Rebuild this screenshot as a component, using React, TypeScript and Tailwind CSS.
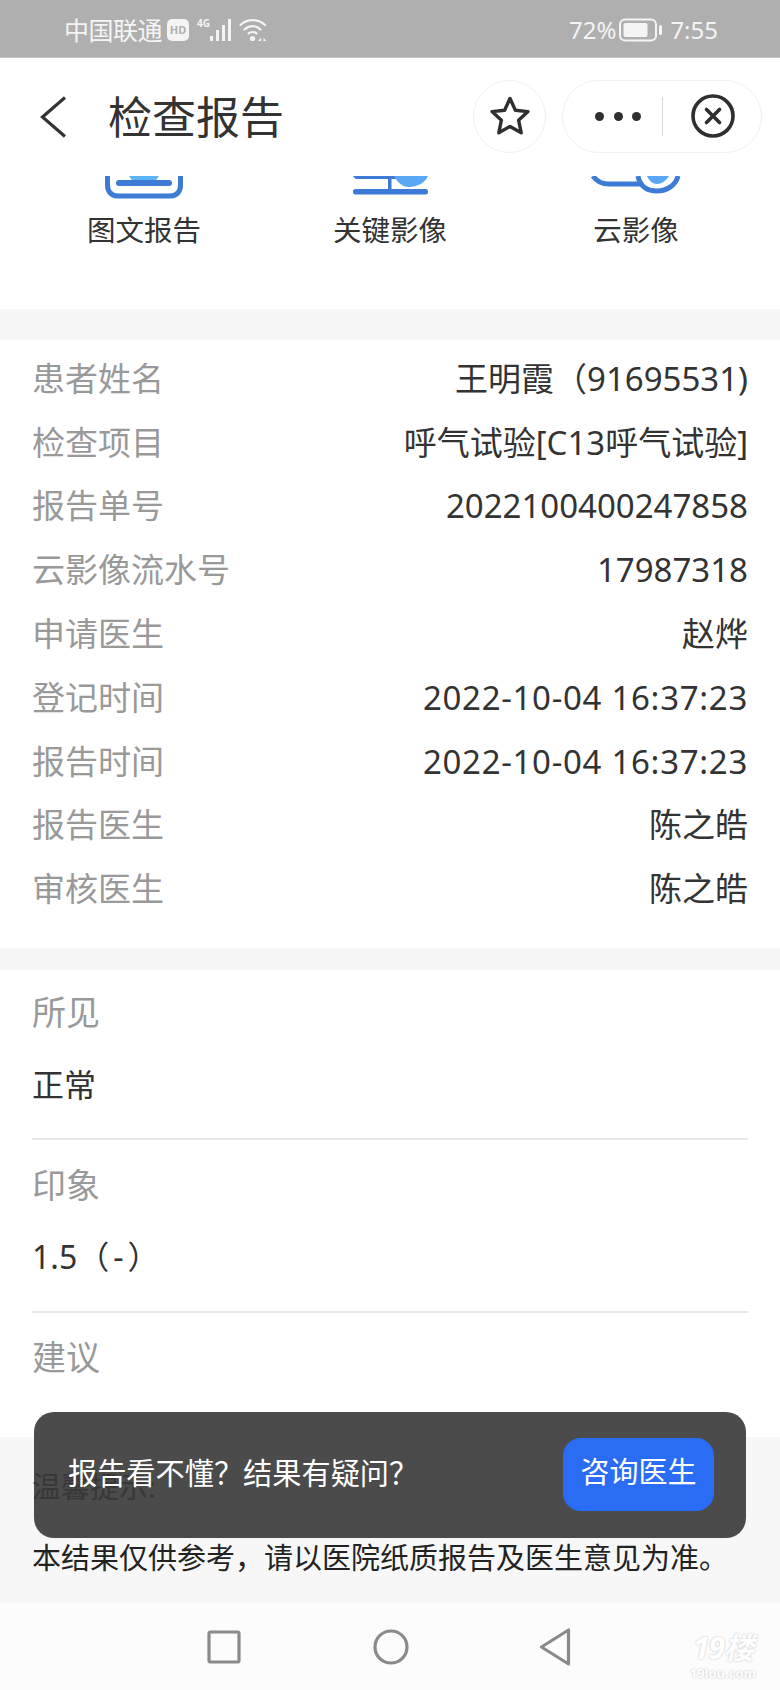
const fontStack = "font-['Noto_Sans','Noto_Sans_CJK_SC',sans-serif]";

const infoRows = [
  { label: "患者姓名", value: "王明霞（91695531)", tweak: "" },
  { label: "检查项目", value: "呼气试验[C13呼气试验]", tweak: "" },
  { label: "报告单号", value: "2022100400247858", tweak: "" },
  { label: "云影像流水号", value: "17987318", tweak: "" },
  { label: "申请医生", value: "赵烨", tweak: "" },
  { label: "登记时间", value: "2022-10-04 16:37:23", tweak: "tracking-[0.7px]" },
  { label: "报告时间", value: "2022-10-04 16:37:23", tweak: "tracking-[0.7px]" },
  { label: "报告医生", value: "陈之皓", tweak: "" },
  { label: "审核医生", value: "陈之皓", tweak: "" },
];

/* status bar */
function StatusBar() {
  return (
    <div className="flex h-[58px] shrink-0 items-center justify-between border-b border-[#c4c4c4] bg-[#afafaf] pl-[64px] pr-[62px] pt-[2px] text-[#f4f4f4]">
      <div className="flex items-center">
        <span className="text-[25px] leading-[30px] tracking-[-0.5px]">中国联通</span>
        <span className="ml-[5px] flex h-[22px] w-[22px] items-center justify-center rounded-[5px] bg-[#f4f4f4] text-[11px] font-bold leading-none text-[#afafaf]">
          HD
        </span>
        <div className="relative ml-[8px] h-[24px] w-[36px]">
          <span className="absolute left-0 top-[-2px] text-[10px] font-bold leading-[14px]">4G</span>
          <svg width="36" height="24" viewBox="0 0 36 24" className="absolute left-0 top-0">
            <rect x="13" y="18" width="3" height="5" fill="#f4f4f4" />
            <rect x="19" y="12" width="3" height="11" fill="#f4f4f4" />
            <rect x="25" y="7" width="3" height="16" fill="#f4f4f4" />
            <rect x="31" y="1" width="3" height="22" fill="#f4f4f4" />
          </svg>
        </div>
        <svg width="28" height="24" viewBox="0 0 28 24" className="ml-[6px]" fill="none" stroke="#f4f4f4" strokeWidth="2.2" strokeLinecap="round">
          <path d="M1.5 7 C8 0.5 19 0.5 26 7" />
          <path d="M5.5 11.5 C10 7 17 7 21.5 11.5" />
          <path d="M9.5 15.5 C11.5 13.5 15.5 13.5 17.5 15.5" />
          <circle cx="13.5" cy="20.5" r="2.6" fill="#f4f4f4" stroke="none" />
          <path d="M19 23 l3.2 -3.5 v3.5 z M27.5 23 l-3 -3.5 v3.5 z" fill="#f4f4f4" stroke="none" />
        </svg>
      </div>
      <div className="flex items-center">
        <span className="text-[24px] leading-[30px]">72%</span>
        <svg width="44" height="24" viewBox="0 0 44 24" className="ml-[3px]" fill="none">
          <rect x="1" y="1.5" width="36" height="21" rx="5" stroke="#f4f4f4" strokeWidth="2" />
          <rect x="4.5" y="5" width="24" height="14" rx="2" fill="#f4f4f4" />
          <rect x="40" y="7" width="3" height="10" rx="1.5" fill="#f4f4f4" />
        </svg>
        <span className="ml-[7px] text-[24px] leading-[30px]">7:55</span>
      </div>
    </div>
  );
}

/* title bar with capsule */
function TitleBar() {
  return (
    <div className="flex h-[118px] shrink-0 items-center bg-white pl-[40px] pr-[18px]">
      <svg width="26" height="42" viewBox="0 0 26 42" fill="none" stroke="#333333" strokeWidth="3.2">
        <path d="M25 1.5 L2.5 21 L25 40.5" />
      </svg>
      <span className="ml-[42px] text-[44px] leading-[56px] text-[#333333]">检查报告</span>
      <div className="ml-auto mb-[2px] flex items-center gap-[16px]">
        <div className="flex h-[73px] w-[73px] items-center justify-center rounded-full border border-[#f0f0f0]">
          <svg width="42" height="42" viewBox="0 0 42 42" fill="none" stroke="#2f2f2f" strokeWidth="3.4" strokeLinejoin="round">
            <path d="M21 3.5 L26.4 15.2 L39 16.6 L29.6 25.2 L32.2 37.8 L21 31.4 L9.8 37.8 L12.4 25.2 L3 16.6 L15.6 15.2 Z" />
          </svg>
        </div>
        <div className="flex h-[73px] w-[200px] items-center rounded-full border border-[#f0f0f0] pl-[32px]">
          <div className="flex w-[46px] justify-between">
            <span className="h-[9px] w-[9px] rounded-full bg-[#2f2f2f]" />
            <span className="h-[9px] w-[9px] rounded-full bg-[#2f2f2f]" />
            <span className="h-[9px] w-[9px] rounded-full bg-[#2f2f2f]" />
          </div>
          <div className="ml-[21px] h-[39px] w-px bg-[#d8d8d8]" />
          <svg width="44" height="44" viewBox="0 0 44 44" className="ml-[28px]" fill="none" stroke="#2f2f2f">
            <circle cx="22" cy="22" r="20" strokeWidth="3.6" />
            <path d="M15.5 15.5 L28.5 28.5 M28.5 15.5 L15.5 28.5" strokeWidth="3.6" strokeLinecap="round" />
          </svg>
        </div>
      </div>
    </div>
  );
}

/* the three shortcuts, scrolled so only the icon bottoms show */
function Shortcuts() {
  return (
    <div className="grid h-[133px] shrink-0 grid-cols-[288px_204px_288px] bg-white">
      <div className="flex flex-col items-center">
        <svg width="90" height="23" viewBox="0 0 90 23" fill="none">
          <path d="M8.5 0 V9 C8.5 16 12.5 20 19.5 20 H70.5 C77.5 20 81.5 16 81.5 9 V0" stroke="#3e7bd6" strokeWidth="5" />
          <path d="M30 0 H60 L57 4 H33 Z" fill="#5cb4f2" />
          <rect x="17" y="4" width="56" height="6" rx="3" fill="#3e7bd6" />
        </svg>
        <span className="mt-[13px] text-[28.5px] leading-[36px] text-[#333333]">图文报告</span>
      </div>
      <div className="flex flex-col items-center">
        <svg width="90" height="23" viewBox="0 0 90 23" fill="none">
          <path d="M8 0 H82 C81 1.5 80 2.5 79 3 H11 C10 2.5 9 1.5 8 0 Z" fill="#3e7bd6" />
          <rect x="43" y="0" width="3.5" height="15" fill="#3e7bd6" />
          <path d="M49 0 H83 C80 7 72 11 64 11 C57 11 52 6 49 0 Z" fill="#5aa8f5" />
          <rect x="8" y="13" width="75" height="5.5" rx="2.5" fill="#3e7bd6" />
        </svg>
        <span className="mt-[13px] text-[28.5px] leading-[36px] text-[#333333]">关键影像</span>
      </div>
      <div className="flex flex-col items-center">
        <svg width="90" height="23" viewBox="0 0 90 23" fill="none">
          <path d="M2 0 C6 6 11 8 18 8 H50" stroke="#3e7bd6" strokeWidth="5" />
          <path d="M47 0 C49 11 57 15 66 15 C76 15 85 9 87 0" stroke="#3e7bd6" strokeWidth="5" />
          <path d="M56 0 H78 C75 5 70 8 66 8 C62 8 58 5 56 0 Z" fill="#5aa8f5" />
        </svg>
        <span className="mt-[13px] text-[28.5px] leading-[36px] text-[#333333]">云影像</span>
      </div>
    </div>
  );
}

function InfoList() {
  return (
    <div className="h-[608px] shrink-0 bg-white px-[32px] pt-[7px]">
      {infoRows.map((row) => (
        <div key={row.label} className="flex h-[63.8px] items-center justify-between text-[33px] leading-[44px]">
          <span className="text-[#999999]">{row.label}</span>
          <span className={`text-[#333333] ${row.tweak}`}>{row.value}</span>
        </div>
      ))}
    </div>
  );
}

function Findings() {
  return (
    <div className="flex-1 bg-white px-[32px]">
      <div className="h-[170px] border-b-2 border-[#e8e8e8] pt-[20px]">
        <p className="text-[34px] leading-[44px] text-[#999999]">所见</p>
        <p className="mt-[29px] text-[32px] leading-[44px] text-[#333333]">正常</p>
      </div>
      <div className="h-[173px] border-b-2 border-[#e8e8e8] pt-[23px]">
        <p className="text-[34px] leading-[44px] text-[#999999]">印象</p>
        <p className="mt-[28px] text-[32px] leading-[44px] text-[#333333]">
          1.5（<span className="px-[4px]">-</span>）
        </p>
      </div>
      <p className="mt-[22px] text-[34px] leading-[44px] text-[#999999]">建议</p>
    </div>
  );
}

function NavBar() {
  return (
    <div className="relative flex h-[87px] shrink-0 items-center bg-[#fcfcfc] pl-[207px]">
      <svg width="34" height="34" viewBox="0 0 34 34" fill="none" stroke="#8a8a8a" strokeWidth="3.2" strokeLinejoin="round">
        <rect x="2" y="2" width="30" height="30" rx="1.5" />
      </svg>
      <svg width="36" height="36" viewBox="0 0 36 36" className="ml-[132px]" fill="none" stroke="#8a8a8a" strokeWidth="3.2">
        <circle cx="18" cy="18" r="16" />
      </svg>
      <svg width="32" height="38" viewBox="0 0 32 38" className="ml-[130px]" fill="none" stroke="#8a8a8a" strokeWidth="3.2" strokeLinejoin="round">
        <path d="M29.5 2 V36 L2.5 19 Z" />
      </svg>
      {/* site watermark */}
      <div className="absolute right-[23px] bottom-[10px] flex w-[68px] flex-col items-center text-white [text-shadow:0_0_2px_#b8b8b8]">
        <span className="text-[30px] font-bold italic leading-[32px] tracking-[-1px]">19楼</span>
        <span className="mt-[2px] text-[13px] font-bold leading-[14px]">19lou.com</span>
      </div>
    </div>
  );
}

export default function App() {
  return (
    <div className={`relative flex h-[1690px] w-[780px] flex-col overflow-hidden bg-white ${fontStack}`}>
      <StatusBar />
      <TitleBar />
      <Shortcuts />
      <div className="h-[31px] shrink-0 bg-[#f7f7f7]" />
      <InfoList />
      <div className="h-[22px] shrink-0 bg-[#f7f7f7]" />
      <Findings />
      <div className="h-[166px] shrink-0 bg-[#f7f7f7] px-[32px] pt-[30px]">
        <p className="text-[29px] leading-[40px] text-[#333333]">温馨提示:</p>
        <p className="mt-[31px] whitespace-nowrap text-[29px] leading-[40px] text-[#222222]">本结果仅供参考，请以医院纸质报告及医生意见为准。</p>
      </div>
      <NavBar />

      {/* floating consult bar */}
      <div className="absolute left-[34px] top-[1412px] flex h-[126px] w-[712px] items-center justify-between rounded-[20px] bg-[#373737]/90 pb-[4px] pl-[34px] pr-[32px]">
        <span className="text-[29.2px] leading-[36px] text-white">报告看不懂？结果有疑问？</span>
        <div className="mt-[3px] flex h-[73px] w-[151px] items-center justify-center rounded-[18px] bg-[#2a6df4] pb-[5px] text-[29px] leading-[36px] text-white">
          咨询医生
        </div>
      </div>
    </div>
  );
}
